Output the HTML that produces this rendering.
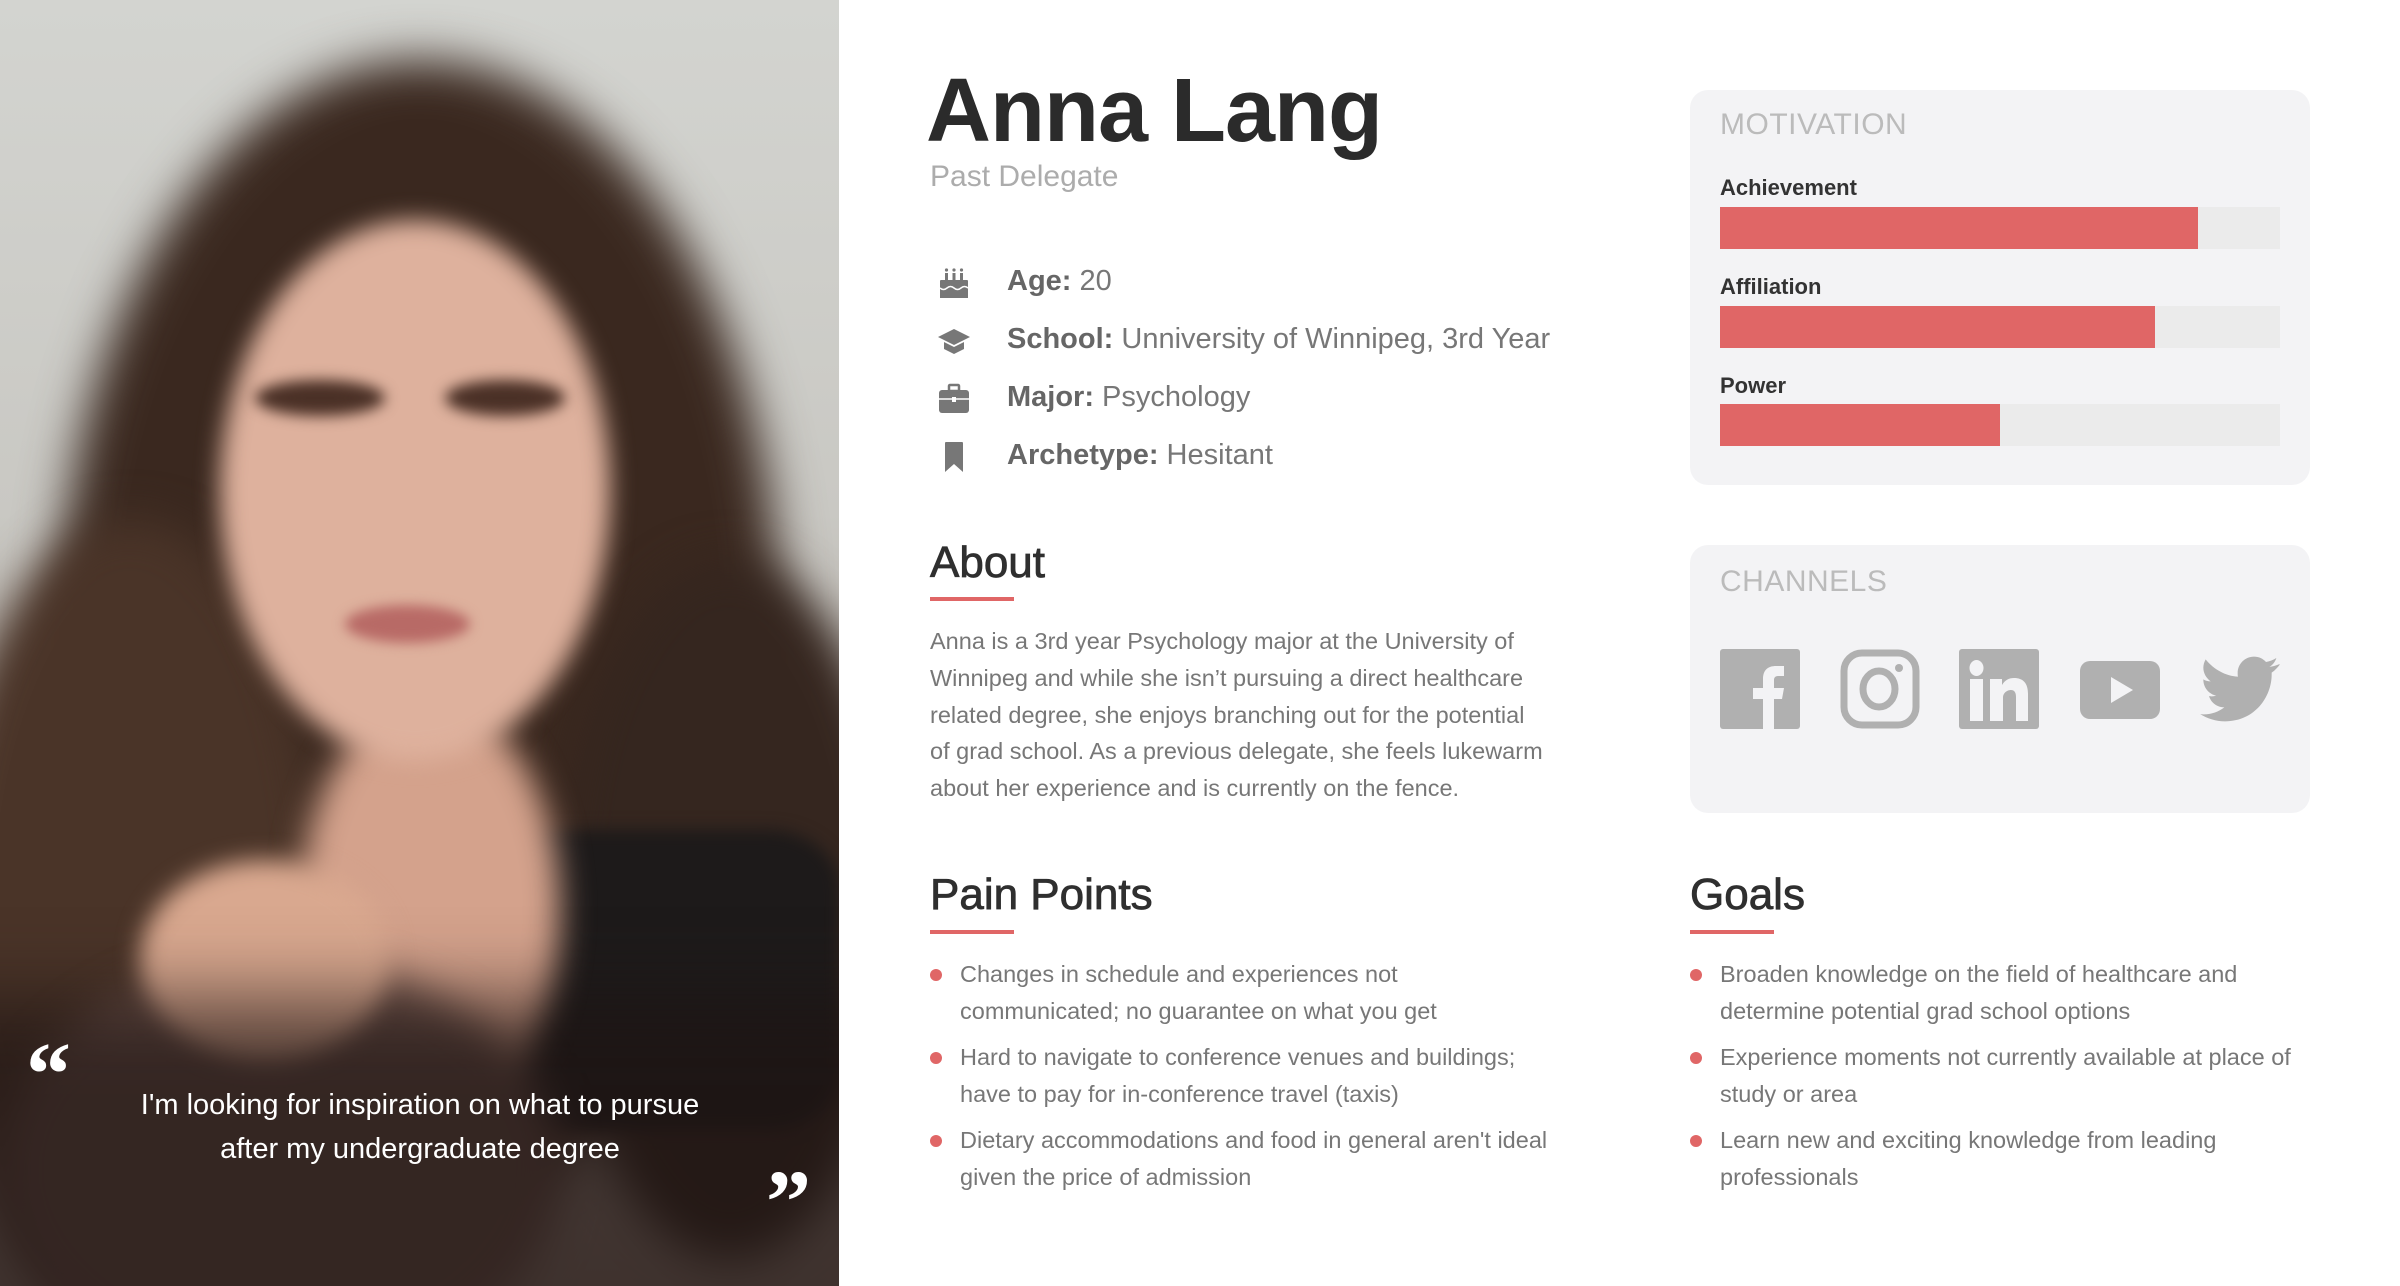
<!DOCTYPE html>
<html><head><meta charset="utf-8"><style>
*{margin:0;padding:0;box-sizing:border-box}
html,body{width:2400px;height:1286px;overflow:hidden}
body{background:#fff;font-family:"Liberation Sans",sans-serif;position:relative}
.abs{position:absolute}
.photo{left:0;top:0;width:839px;height:1286px;overflow:hidden;background:linear-gradient(#d3d4d0 0%,#c9c8c3 40%,#8c7a70 100%)}
.photo div{position:absolute;border-radius:50%}
.name{left:926px;top:60px;font-size:90px;font-weight:bold;color:#2b2b2b;letter-spacing:-1px;white-space:nowrap}
.sub{left:930px;top:160px;font-size:30px;color:#acacac}
.row{position:absolute;left:1007px;font-size:29px;color:#777;white-space:nowrap}
.row b{color:#666}
.ic{position:absolute;left:936px;width:36px;height:36px}
h2{position:absolute;font-size:44px;font-weight:normal;color:#2f2f2f;-webkit-text-stroke:.8px #2f2f2f}
.ul{position:absolute;height:4px;width:84px;background:#e06666}
.p{position:absolute;font-size:23.5px;line-height:36.8px;color:#777;white-space:nowrap}
.li{position:absolute;font-size:23.5px;line-height:37px;color:#777;padding-left:30px;white-space:nowrap}
.li:before{content:"";position:absolute;left:0;top:13px;width:12px;height:12px;border-radius:50%;background:#e06666}
.card{position:absolute;background:#f3f3f5;border-radius:18px}
.ct{position:absolute;font-size:30px;color:#bbb;letter-spacing:.5px}
.lab{position:absolute;left:1720px;font-size:22px;font-weight:bold;color:#333}
.bar{position:absolute;left:1720px;width:560px;height:42px;background:#ebebeb}
.bar i{display:block;height:100%;background:#e06666}
</style></head><body>
<div class="abs photo">
 <div style="left:60px;top:60px;width:720px;height:1150px;background:#3a281f;filter:blur(24px)"></div>
 <div style="left:-60px;top:520px;width:380px;height:800px;background:#4a3428;filter:blur(22px)"></div>
 <div style="left:560px;top:560px;width:340px;height:700px;background:#35261f;filter:blur(22px)"></div>
 <div style="left:480px;top:830px;width:360px;height:300px;background:#1d1a1a;border-radius:20%;filter:blur(8px)"></div>
 <div style="left:300px;top:700px;width:260px;height:420px;background:#d4a28c;filter:blur(16px)"></div>
 <div style="left:220px;top:220px;width:390px;height:540px;background:#deb19d;filter:blur(12px)"></div>
 <div style="left:255px;top:380px;width:130px;height:36px;background:#4a3026;filter:blur(7px)"></div>
 <div style="left:445px;top:380px;width:120px;height:36px;background:#4a3026;filter:blur(7px)"></div>
 <div style="left:345px;top:605px;width:125px;height:38px;background:#b86a66;filter:blur(6px)"></div>
 <div style="left:0px;top:960px;width:560px;height:420px;background:#6a5048;filter:blur(20px)"></div>
 <div style="left:140px;top:860px;width:250px;height:200px;background:#d9a88f;filter:blur(12px)"></div>
 <div style="left:-100px;top:1000px;width:1040px;height:500px;background:rgba(30,20,18,.7);filter:blur(40px);border-radius:0"></div>
</div>
<div class="abs" style="left:26px;top:1030px;font-size:90px;font-weight:bold;color:#fff;font-family:'Liberation Serif',serif;line-height:1">“</div>
<div class="abs" style="left:60px;top:1083px;width:720px;text-align:center;font-size:29px;line-height:44px;color:#fff">I'm looking for inspiration on what to pursue<br>after my undergraduate degree</div>
<div class="abs" style="left:766px;top:1158px;font-size:90px;font-weight:bold;color:#fff;font-family:'Liberation Serif',serif;line-height:1">”</div>

<div class="abs name">Anna Lang</div>
<div class="abs sub">Past Delegate</div>

<svg class="ic" style="top:265px" viewBox="0 0 36 36" fill="#777"><rect x="4" y="18" width="28" height="15"/><rect x="4" y="15" width="28" height="4" rx="1"/><rect x="9" y="8" width="3" height="7"/><rect x="16.5" y="8" width="3" height="7"/><rect x="24" y="8" width="3" height="7"/><circle cx="10.5" cy="5" r="1.6"/><circle cx="18" cy="5" r="1.6"/><circle cx="25.5" cy="5" r="1.6"/><path d="M4 23q3.5 3 7 0t7 0t7 0t7 0" stroke="#fff" stroke-width="1.5" fill="none"/></svg>
<div class="row" style="top:265px"><b>Age:</b> 20</div>
<svg class="ic" style="top:323px" viewBox="0 0 36 36" fill="#777"><path d="M18 6L2 14l16 8 16-8z"/><path d="M8 19v7l10 5 10-5v-7l-10 5z"/></svg>
<div class="row" style="top:323px"><b>School:</b> Unniversity of Winnipeg, 3rd Year</div>
<svg class="ic" style="top:381px" viewBox="0 0 36 36" fill="#777"><rect x="3" y="9" width="30" height="23" rx="3"/><rect x="13" y="4" width="10" height="6" rx="1" fill="none" stroke="#777" stroke-width="2.5"/><path d="M3 18h30" stroke="#fff" stroke-width="1.5"/><rect x="16" y="16" width="4" height="5" fill="#fff"/></svg>
<div class="row" style="top:381px"><b>Major:</b> Psychology</div>
<svg class="ic" style="top:439px" viewBox="0 0 36 36" fill="#777"><path d="M10 3h16a1 1 0 0 1 1 1v29l-9-8-9 8V4a1 1 0 0 1 1-1z"/></svg>
<div class="row" style="top:439px"><b>Archetype:</b> Hesitant</div>

<h2 style="left:930px;top:538px">About</h2>
<div class="ul" style="left:930px;top:597px"></div>
<div class="p" style="left:930px;top:623px">Anna is a 3rd year Psychology major at the University of<br>Winnipeg and while she isn’t pursuing a direct healthcare<br>related degree, she enjoys branching out for the potential<br>of grad school. As a previous delegate, she feels lukewarm<br>about her experience and is currently on the fence.</div>

<h2 style="left:930px;top:870px">Pain Points</h2>
<div class="ul" style="left:930px;top:930px"></div>
<div class="li" style="left:930px;top:956px">Changes in schedule and experiences not<br>communicated; no guarantee on what you get</div>
<div class="li" style="left:930px;top:1039px">Hard to navigate to conference venues and buildings;<br>have to pay for in-conference travel (taxis)</div>
<div class="li" style="left:930px;top:1122px">Dietary accommodations and food in general aren't ideal<br>given the price of admission</div>

<h2 style="left:1690px;top:870px">Goals</h2>
<div class="ul" style="left:1690px;top:930px"></div>
<div class="li" style="left:1690px;top:956px">Broaden knowledge on the field of healthcare and<br>determine potential grad school options</div>
<div class="li" style="left:1690px;top:1039px">Experience moments not currently available at place of<br>study or area</div>
<div class="li" style="left:1690px;top:1122px">Learn new and exciting knowledge from leading<br>professionals</div>

<div class="card" style="left:1690px;top:90px;width:620px;height:395px"></div>
<div class="ct" style="left:1720px;top:108px">MOTIVATION</div>
<div class="lab" style="top:175px">Achievement</div>
<div class="bar" style="top:207px"><i style="width:478px"></i></div>
<div class="lab" style="top:274px">Affiliation</div>
<div class="bar" style="top:306px"><i style="width:435px"></i></div>
<div class="lab" style="top:373px">Power</div>
<div class="bar" style="top:404px"><i style="width:280px"></i></div>

<div class="card" style="left:1690px;top:545px;width:620px;height:268px"></div>
<div class="ct" style="left:1720px;top:565px">CHANNELS</div>
<svg class="abs" style="left:1720px;top:649px" width="80" height="80" viewBox="0 0 80 80"><rect width="80" height="80" rx="3" fill="#b0b0b0"/><path d="M43 80V50H33V39h10v-9c0-9 5-13 13-13h8v10h-6c-3 0-4 2-4 4v8h10l-2 11h-8v30z" fill="#f3f3f5"/></svg>
<svg class="abs" style="left:1840px;top:649px" width="80" height="80" viewBox="0 0 80 80" fill="none" stroke="#b0b0b0"><rect x="4" y="4" width="72" height="72" rx="18" stroke-width="7"/><ellipse cx="39" cy="40" rx="16" ry="18" stroke-width="7"/><circle cx="59" cy="19" r="4" fill="#b0b0b0" stroke="none"/></svg>
<svg class="abs" style="left:1959px;top:649px" width="80" height="80" viewBox="0 0 80 80"><rect width="80" height="80" rx="3" fill="#b0b0b0"/><g fill="#f3f3f5"><rect x="11" y="30" width="13" height="42"/><ellipse cx="17.5" cy="19" rx="7" ry="8"/><path d="M31 72V30h12v6c3-5 7-7 12-7 9 0 14 5 14 16v27H57V48c0-5-2-7-5-7s-8 2-8 8v23z"/></g></svg>
<svg class="abs" style="left:2080px;top:661px" width="80" height="58" viewBox="0 0 80 58"><rect width="80" height="58" rx="10" fill="#b0b0b0"/><path d="M31 16v26l22-13z" fill="#f3f3f5"/></svg>
<svg class="abs" style="left:2200px;top:649px" width="80" height="80" viewBox="0 0 24 24"><path fill="#b0b0b0" d="M23.6 4.6c-.9.4-1.8.6-2.8.8 1-.6 1.8-1.6 2.1-2.7-.9.6-2 1-3.1 1.2-.9-1-2.200-1.6-3.6-1.6-2.7 0-4.9 2.2-4.9 4.900 0 .4 0 .8.1 1.1C7.7 8.1 4.1 6.1 1.7 3.1c-.4.7-.7 1.6-.7 2.500 0 1.7.9 3.2 2.2 4.1-.8 0-1.6-.2-2.2-.6v.1c0 2.4 1.7 4.4 3.9 4.8-.4.1-.8.2-1.3.2-.3 0-.6 0-.9-.1.6 2 2.4 3.4 4.6 3.4-1.7 1.3-3.8 2.1-6.1 2.1-.4 0-.8 0-1.200-.1 2.2 1.4 4.8 2.2 7.5 2.2 9.1 0 14-7.5 14-14v-.6c1-.7 1.8-1.6 2.500-2.5z"/></svg>
</body></html>
